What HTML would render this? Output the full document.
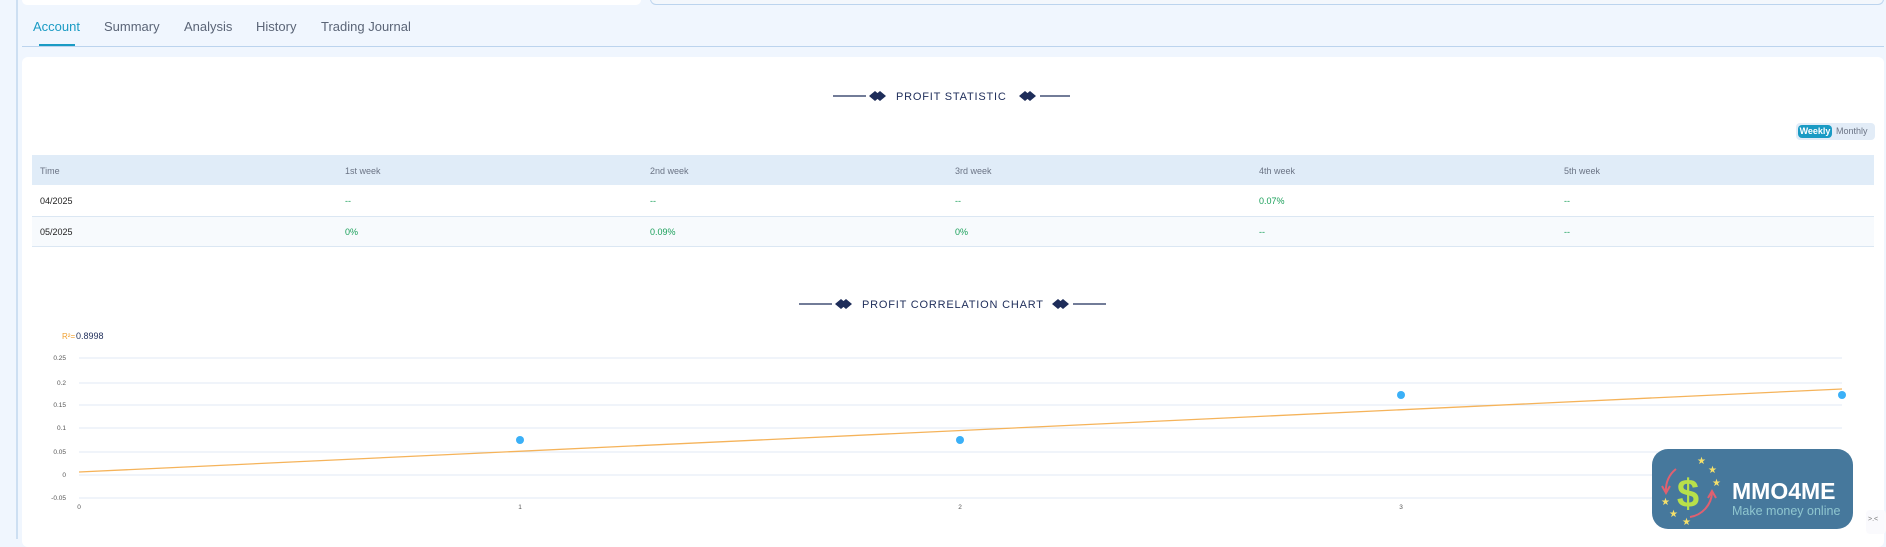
<!DOCTYPE html>
<html><head><meta charset="utf-8"><style>
*{margin:0;padding:0;box-sizing:border-box}
body{width:1886px;height:539px;overflow:hidden;background:#f0f6fe;font-family:"Liberation Sans",sans-serif;position:relative}
.abs{position:absolute}
.tab{position:absolute;top:19px;font-size:13px;color:#5b6577}
.th,.td{position:absolute;font-size:9px}
.th{color:#6b7485}
.td{color:#222}
.g{color:#1aa05a}
.dash{color:#1aa05a}
</style></head><body>
<div class="abs" style="left:16px;top:0;width:2px;height:539px;background:#cddff2"></div>
<div class="abs" style="left:22px;top:0;width:619px;height:5px;background:#fff;border-radius:0 0 6px 6px"></div>
<div class="abs" style="left:650px;top:-2px;width:1234px;height:7px;background:#f3f7fc;border:1px solid #bcd4ee;border-top:none;border-radius:0 0 6px 6px"></div>
<div class="tab" style="left:33px;color:#1a9bc4">Account</div>
<div class="tab" style="left:104px">Summary</div>
<div class="tab" style="left:184px">Analysis</div>
<div class="tab" style="left:256px">History</div>
<div class="tab" style="left:321px">Trading Journal</div>
<div class="abs" style="left:39px;top:44px;width:36px;height:2px;background:#1a9bc4"></div>
<div class="abs" style="left:22px;top:46px;width:1862px;height:1px;background:#bcd4ee"></div>
<div class="abs" style="left:22px;top:57px;width:1862px;height:490px;background:#fff;border-radius:6px"></div>

<svg class="abs" style="left:830px;top:86px" width="240" height="20">
<line x1="3" y1="10" x2="36" y2="10" stroke="#1e2d5a" stroke-width="1.2"/>
<path d="M39 10 L45 5 L51 10 L45 15Z M44 10 L50 5 L56 10 L50 15Z" fill="#1e2d5a"/>
<text x="66" y="14" font-family="Liberation Sans" font-size="11" fill="#1e2d5a" letter-spacing="0.8">PROFIT STATISTIC</text>
<path d="M189 10 L195 5 L201 10 L195 15Z M194 10 L200 5 L206 10 L200 15Z" fill="#1e2d5a"/>
<line x1="210" y1="10" x2="240" y2="10" stroke="#1e2d5a" stroke-width="1.2"/>
</svg>

<div class="abs" style="left:1796px;top:123px;width:79px;height:17px;background:#e2ecf7;border-radius:4px"></div>
<div class="abs" style="left:1798px;top:125px;width:34px;height:13px;background:#1a9bc4;border-radius:4px;color:#fff;font-size:9px;font-weight:bold;line-height:13px;text-align:center">Weekly</div>
<div class="abs" style="left:1836px;top:125px;font-size:9px;color:#6b7485;line-height:13px">Monthly</div>

<div class="abs" style="left:32px;top:155px;width:1842px;height:30px;background:#e0ecf8"></div>
<div class="abs" style="left:32px;top:216px;width:1842px;height:31px;background:#f7fafd;border-top:1px solid #dbe7f3;border-bottom:1px solid #dbe7f3"></div>
<div class="th" style="left:40px;top:166px">Time</div>
<div class="th" style="left:345px;top:166px">1st week</div>
<div class="th" style="left:650px;top:166px">2nd week</div>
<div class="th" style="left:955px;top:166px">3rd week</div>
<div class="th" style="left:1259px;top:166px">4th week</div>
<div class="th" style="left:1564px;top:166px">5th week</div>
<div class="td" style="left:40px;top:196px">04/2025</div>
<div class="td dash" style="left:345px;top:196px">--</div>
<div class="td dash" style="left:650px;top:196px">--</div>
<div class="td dash" style="left:955px;top:196px">--</div>
<div class="td g" style="left:1259px;top:196px">0.07%</div>
<div class="td dash" style="left:1564px;top:196px">--</div>
<div class="td" style="left:40px;top:227px">05/2025</div>
<div class="td g" style="left:345px;top:227px">0%</div>
<div class="td g" style="left:650px;top:227px">0.09%</div>
<div class="td g" style="left:955px;top:227px">0%</div>
<div class="td dash" style="left:1259px;top:227px">--</div>
<div class="td dash" style="left:1564px;top:227px">--</div>

<svg class="abs" style="left:796px;top:294px" width="314" height="20">
<line x1="3" y1="10" x2="36" y2="10" stroke="#1e2d5a" stroke-width="1.2"/>
<path d="M39 10 L45 5 L51 10 L45 15Z M44 10 L50 5 L56 10 L50 15Z" fill="#1e2d5a"/>
<text x="66" y="14" font-family="Liberation Sans" font-size="11" fill="#1e2d5a" letter-spacing="0.8">PROFIT CORRELATION CHART</text>
<path d="M256 10 L262 5 L268 10 L262 15Z M261 10 L267 5 L273 10 L267 15Z" fill="#1e2d5a"/>
<line x1="277" y1="10" x2="310" y2="10" stroke="#1e2d5a" stroke-width="1.2"/>
</svg>

<svg class="abs" style="left:0;top:0" width="1886" height="539">
<text x="62" y="339" font-size="8" fill="#f0a030" font-family="Liberation Sans">R²=</text>
<text x="76" y="339" font-size="9" fill="#1e2d5a" font-family="Liberation Sans">0.8998</text>
<g stroke="#e1eaf4" stroke-width="1">
<line x1="79" y1="358" x2="1842" y2="358"/><line x1="79" y1="383" x2="1842" y2="383"/>
<line x1="79" y1="405" x2="1842" y2="405"/><line x1="79" y1="428" x2="1842" y2="428"/>
<line x1="79" y1="452" x2="1842" y2="452"/><line x1="79" y1="475" x2="1842" y2="475"/>
<line x1="79" y1="498" x2="1842" y2="498"/>
</g>
<g font-size="6.5" fill="#555" font-family="Liberation Sans" text-anchor="end">
<text x="66" y="360">0.25</text><text x="66" y="385">0.2</text><text x="66" y="407">0.15</text>
<text x="66" y="430">0.1</text><text x="66" y="454">0.05</text><text x="66" y="477">0</text><text x="66" y="500">-0.05</text>
</g>
<g font-size="6.5" fill="#555" font-family="Liberation Sans" text-anchor="middle">
<text x="79" y="509">0</text><text x="520" y="509">1</text><text x="960" y="509">2</text><text x="1401" y="509">3</text>
</g>
<line x1="79" y1="472" x2="1842" y2="389" stroke="#f5b35a" stroke-width="1.3"/>
<g fill="#3bb0f7"><circle cx="520" cy="440" r="4"/><circle cx="960" cy="440" r="4"/><circle cx="1401" cy="395" r="4"/><circle cx="1842" cy="395" r="4"/></g>
</svg>

<div class="abs" style="left:1652px;top:449px;width:201px;height:80px;background:#46789c;border-radius:16px"></div>
<svg class="abs" style="left:1652px;top:449px" width="201" height="80">
<path d="M24 20 A26 26 0 0 0 14 42" stroke="#e06070" stroke-width="2" fill="none"/>
<path d="M10 37 L14 44 L18 37" stroke="#e06070" stroke-width="2" fill="none"/>
<path d="M38 68 A26 26 0 0 0 60 44" stroke="#e06070" stroke-width="2" fill="none"/>
<path d="M56 49 L60 42 L64 49" stroke="#e06070" stroke-width="2" fill="none"/>
<text x="36" y="58" font-size="40" font-weight="bold" fill="#b8e04a" font-family="Liberation Sans" text-anchor="middle">$</text>
<g fill="#f5e06a" font-size="10" font-family="DejaVu Sans"><text x="45" y="15">★</text><text x="56" y="24">★</text><text x="60" y="37">★</text><text x="9" y="56">★</text><text x="17" y="68">★</text><text x="30" y="76">★</text></g>
<text x="80" y="50" font-size="23" font-weight="bold" fill="#fff" font-family="Liberation Sans">MMO4ME</text>
<text x="80" y="66" font-size="12.5" fill="#8fc6cf" font-family="Liberation Sans">Make money online</text>
</svg>
<div class="abs" style="left:1866px;top:510px;width:20px;height:24px;background:#fafafd;border-radius:4px;font-size:7px;color:#777;padding:6px 2px">&gt;.&lt;</div>
</body></html>
